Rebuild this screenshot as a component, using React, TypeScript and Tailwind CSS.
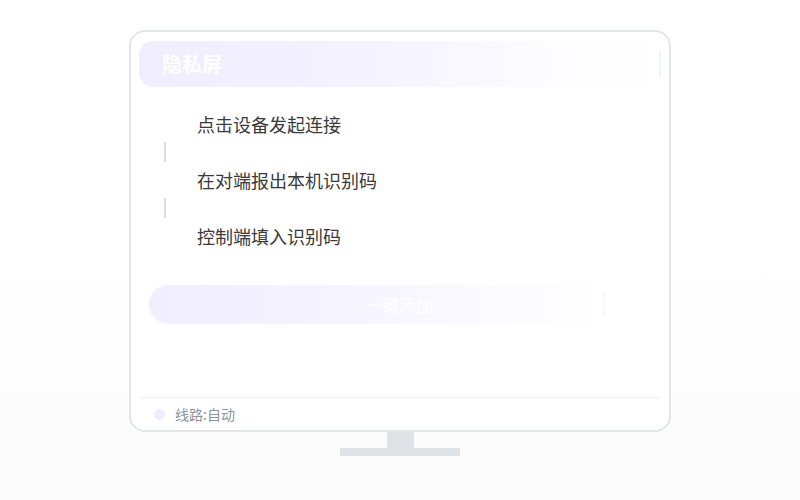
const font = "font-['Noto_Sans_CJK_SC','Noto_Sans',sans-serif]";

const steps = ['点击设备发起连接', '在对端报出本机识别码', '控制端填入识别码'];

export default function App() {
  return (
    <main
      className={`flex flex-col items-center w-full h-[500px] pt-[30px] bg-[linear-gradient(180deg,#ffffff_0%,#ffffff_50%,#fbfbfc_100%)] ${font}`}
    >
      {/* monitor frame */}
      <div className="w-[542px] h-[402px] border-2 border-[#e2e5ea] rounded-[16px] bg-white flex flex-col">
        <div className="px-[8px] pt-[9px]">
          <div className="relative h-[46px] rounded-l-[14px] bg-[linear-gradient(90deg,#f0edff_0%,#f5f3ff_45%,#fdfcff_80%,#ffffff_100%)] flex items-center pl-[23px]">
            <span className="text-[20px] font-bold text-white leading-none">隐私屏</span>
            <div className="absolute right-[0px] top-[10px] w-[2px] h-[26px] bg-[#f3f4f6]" />
          </div>
        </div>

        <div className="flex flex-col pt-[21px] pl-[33px]">
          {steps.map((s, i) => (
            <div key={s} className="flex flex-col">
              <div className="h-[32px] flex items-center pl-[33px] text-[18px] text-[#3a3a3a]">{s}</div>
              {i < steps.length - 1 && (
                <div className="h-[24px] flex items-center">
                  <div className="w-[2px] h-[20px] bg-[#dcdfe4]" />
                </div>
              )}
            </div>
          ))}
        </div>

        <div className="pl-[18px] pr-[20px] pt-[33px]">
          <div className="relative h-[39px] rounded-full bg-[linear-gradient(90deg,#f1eeff_0%,#f6f4ff_40%,#fcfbff_75%,#ffffff_90%)] flex items-center justify-center">
            <span className="text-[17px] text-white">一键添加</span>
            <div className="absolute right-[44px] top-[8px] w-[2px] h-[24px] bg-[#f7f8fa]" />
          </div>
        </div>

        <div className="flex-1" />

        <div className="mx-[10px] border-t border-[#eef0f3] h-[33px] flex items-center pl-[13px] gap-[10px]">
          <div className="w-[11px] h-[11px] rounded-full bg-[#efecfd]" />
          <span className="text-[14px] text-[#8d929b]">线路:自动</span>
        </div>
      </div>

      {/* stand */}
      <div className="w-[27px] h-[16px] bg-[#dfe2e6]" />
      <div className="w-[120px] h-[8px] bg-[#dfe2e6]" />
    </main>
  );
}
